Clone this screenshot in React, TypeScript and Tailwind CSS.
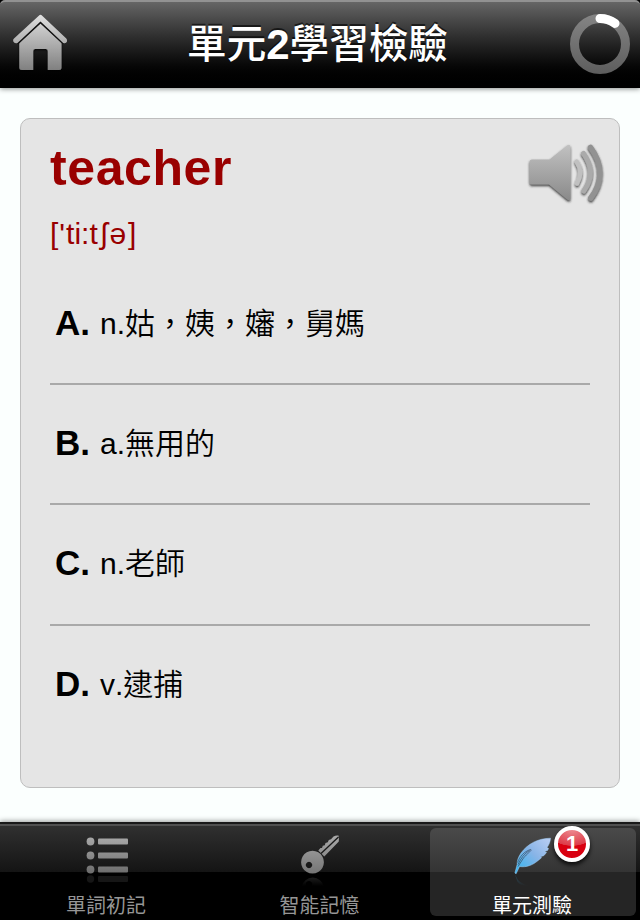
import React from "react";

const choices = [
  { letter: "A", text: "n.姑，姨，嬸，舅媽", row: "h-[120px]" },
  { letter: "B", text: "a.無用的", row: "h-[120px]" },
  { letter: "C", text: "n.老師", row: "h-[121px]" },
  { letter: "D", text: "v.逮捕", row: "h-[120px]" },
];

function HomeIcon() {
  return (
    <svg width="60" height="64" viewBox="10 10 60 64" className="block">
      <defs>
        <linearGradient id="home" x1="0" y1="15" x2="0" y2="70" gradientUnits="userSpaceOnUse">
          <stop offset="0" stopColor="#e0e0e0" />
          <stop offset="1" stopColor="#808080" />
        </linearGradient>
        <filter id="homeShadow" x="-20%" y="-20%" width="140%" height="140%">
          <feDropShadow dx="0" dy="1" stdDeviation="0.8" floodColor="#000" floodOpacity="0.9" />
        </filter>
      </defs>
      <path d="M40.5 22.5 L61.5 43 V67.500 Q61.500 70 59 70 H47.800 V51 Q47.800 49 46 49 H35 Q33.200 49 33.200 51 V70 H22 Q19.300 70 19.300 67.500 V43 Z" fill="url(#home)" filter="url(#homeShadow)" />
      <path d="M17.500 43.500 L40.500 22.300 L63.500 43.500" fill="none" stroke="#111" strokeWidth="2.200" />
      <path d="M38.800 15.700 Q40.500 14 42.200 15.700 L66.300 38.600 Q67.300 39.700 67 41.500 Q66 44 63.200 43 L40.500 21.400 L17.500 43 Q14.500 44 13.300 41.500 Q12.600 39.700 14 38.600 Z" fill="url(#home)" />
    </svg>
  );
}

function ProgressRing() {
  return (
    <svg width="60" height="60" viewBox="0 0 60 60" className="block">
      <defs>
        <linearGradient id="ring" x1="0" y1="0" x2="0" y2="60" gradientUnits="userSpaceOnUse">
          <stop offset="0" stopColor="#858585" />
          <stop offset="1" stopColor="#5d5d5d" />
        </linearGradient>
      </defs>
      <circle cx="30" cy="30" r="25.500" fill="none" stroke="url(#ring)" strokeWidth="9" />
      <path d="M30 4.500 A25.500 25.500 0 0 1 45 9.400" fill="none" stroke="#fff" strokeWidth="9" strokeLinecap="round" />
    </svg>
  );
}

function SpeakerIcon() {
  return (
    <svg width="84" height="68" viewBox="524 140 84 68" className="block">
      <defs>
        <linearGradient id="horn" x1="0" y1="144" x2="0" y2="201" gradientUnits="userSpaceOnUse">
          <stop offset="0" stopColor="#c2c2c2" />
          <stop offset="1" stopColor="#898989" />
        </linearGradient>
        <filter id="hornShadow" x="-20%" y="-20%" width="140%" height="140%">
          <feDropShadow dx="0" dy="1.500" stdDeviation="0.900" floodColor="#222" floodOpacity="0.900" />
        </filter>
      </defs>
      <g filter="url(#hornShadow)">
        <path d="M532 159.500 H549.500 L567 145.500 Q570.500 143.500 570.500 147.500 V198 Q570.500 202 566.500 199 L549 184.500 H532 Q529.500 184.500 529.500 182 V162 Q529.500 159.500 532 159.500Z" fill="url(#horn)" />
        <g fill="none" strokeLinecap="round">
          <path d="M576.500 161.500 C581.500 169 581.500 176 577 183.500" stroke="#c0c0c0" strokeWidth="4.500" />
          <path d="M583.500 153.500 C592.500 166 592.500 179 583.800 191" stroke="#aaaaaa" strokeWidth="5" />
          <path d="M590.500 147.500 C603 164 603 182 590.800 198" stroke="#929292" strokeWidth="5.500" />
        </g>
      </g>
    </svg>
  );
}

function ListIcon() {
  return (
    <svg width="50" height="52" viewBox="82 832 50 52" className="block">
      <defs>
        <linearGradient id="list" x1="0" y1="836" x2="0" y2="874" gradientUnits="userSpaceOnUse">
          <stop offset="0" stopColor="#aaa" />
          <stop offset="1" stopColor="#6c6c6c" />
        </linearGradient>
      </defs>
      <g fill="url(#list)">
        {[841.5, 855.500, 869.5].map((y) => (
          <g key={y}>
            <circle cx="91.500" cy={y} r="3.900" />
            <rect x="99" y={y - 3} width="30" height="6" rx="1" />
          </g>
        ))}
      </g>
      <g fill="#161616">
        <circle cx="91.500" cy="879" r="3.700" />
        <rect x="99" y="876" width="30" height="6" rx="1" />
      </g>
    </svg>
  );
}

function KeyIcon() {
  return (
    <svg width="50" height="60" viewBox="295 830 50 60" className="block">
      <defs>
        <linearGradient id="key" x1="0" y1="835" x2="0" y2="874" gradientUnits="userSpaceOnUse">
          <stop offset="0" stopColor="#aaa" />
          <stop offset="1" stopColor="#747474" />
        </linearGradient>
        <linearGradient id="keyReflection" x1="0" y1="875" x2="0" y2="886" gradientUnits="userSpaceOnUse">
          <stop offset="0" stopColor="#242424" />
          <stop offset="1" stopColor="#000" />
        </linearGradient>
      </defs>
      <path d="M318.300 850.500 L320.500 848 L322 848 L322.800 845.800 L324.800 845.300 L325.500 843 L327.800 842.300 L328.800 840 L331 839.300 L333.500 836.500 Q336 835 338.500 835.500 Q339.300 838 338.800 841.500 L324.300 856.500 Z" fill="url(#key)" />
      <path d="M321 853.500 L338.500 837" stroke="#181818" strokeWidth="1.300" />
      <path fillRule="evenodd" d="M312.500 850.800 A11.400 11.400 0 1 0 312.510 850.800Z M309 861.800 A3.200 3.200 0 1 1 308.990 861.800Z" fill="url(#key)" />
      <path fillRule="evenodd" d="M301.500 887 A11.500 12 0 0 1 324 887Z M309 881 A3.200 3.200 0 1 0 309.010 881Z" fill="url(#keyReflection)" />
    </svg>
  );
}

function FeatherIcon() {
  return (
    <svg width="50" height="58" viewBox="508 832 50 58" className="block">
      <defs>
        <linearGradient id="feather" x1="548" y1="838" x2="518" y2="868" gradientUnits="userSpaceOnUse">
          <stop offset="0" stopColor="#b8cdf3" />
          <stop offset="0.500" stopColor="#88b4e7" />
          <stop offset="1" stopColor="#40b5ef" />
        </linearGradient>
        <linearGradient id="featherReflection" x1="0" y1="875" x2="0" y2="886" gradientUnits="userSpaceOnUse">
          <stop offset="0" stopColor="#2a4655" />
          <stop offset="1" stopColor="#252525" />
        </linearGradient>
      </defs>
      <path d="M550.500 838.200 C538 838.500 528 843.500 521 853 C518 857.500 517 861 517.200 864.500 L514.900 873 L516.100 873.800 L519.500 866.500 C526 867.500 532 865.500 537.500 861 L541.500 857.800 L540.500 856.800 L544 855.500 L546.500 852.500 L544.500 851.500 L547.500 850.500 L548.500 848.500 L547 847.500 C549.200 844.500 550.300 841.500 550.500 838.200Z" fill="url(#feather)" stroke="#a4d3fb" strokeWidth="0.500" />
      <path d="M517.600 862.500 C519.500 857 524 851.500 530.500 849.500 C533 850 527.500 853 523.500 858 L518 866.500 M518 864.500 C521 858 524.500 853.500 529.500 850.500" fill="none" stroke="#35495e" strokeWidth="0.700" />
      <path d="M515 874.500 L518 880 Q522 884 529 886 Q520 886 517.500 882 Z" fill="url(#featherReflection)" />
    </svg>
  );
}

export default function App() {
  return (
    <div className="flex h-[920px] w-[640px] flex-col overflow-hidden bg-[#fbfffe] font-['Liberation_Sans','Noto_Sans_CJK_TC',sans-serif]" lang="zh-TW">
      <header className="z-10 h-[88px] shrink-0 bg-black shadow-[0_1px_5px_rgba(0,0,0,0.45)]">
        <div className="flex h-full items-start justify-between rounded-t-[5px] border-t-2 border-[#929292] bg-linear-to-b from-[#666] to-black pr-[10px] pl-[10px]">
          <div className="w-[60px] pt-[8px]"><HomeIcon /></div>
          <h1 className="mr-[5px] flex h-[86px] items-center text-[39.6px] leading-none font-medium whitespace-nowrap text-white [text-shadow:0_-2px_0_rgba(0,0,0,0.6)]">
            單元<span className="text-[42px] font-bold">2</span>學習檢驗
          </h1>
          <div className="pt-[12px]"><ProgressRing /></div>
        </div>
      </header>

      <main className="flex-1 px-5 pt-[30px]">
        <section className="h-[670px] rounded-[10px] border border-[#bebebe] bg-[#e5e5e5] px-[29px]">
          <div className="flex h-[146px] justify-between">
            <div className="pt-[21px] text-[#990000]">
              <h2 className="text-[50px] leading-[56px] font-bold tracking-[0.6px]">teacher</h2>
              <p className="mt-[20px] text-[30px] leading-[36px]">
                [<span className="mr-[1px] ml-[1px]">&#39;</span>ti:t<span className="mr-[2px] ml-[3px]">ʃ</span>ə<span className="ml-[2px]">]</span>
              </p>
            </div>
            <div className="-mr-[18px] pt-[21px]"><SpeakerIcon /></div>
          </div>
          <ul className="text-black">
            {choices.map((choice, index) => (
              <li key={choice.letter} className={`${choice.row} flex items-start pl-[5px] ${index < 3 ? "border-b-2 border-[#a9a9a9]" : ""}`}>
                <span className="mt-[38px] w-[45px] shrink-0 text-[35px] leading-[40px] font-bold">{choice.letter}.</span>
                <span className="mt-[37px] text-[30px] leading-[44px] font-[350] whitespace-nowrap [font-kerning:none]">{choice.text}</span>
              </li>
            ))}
          </ul>
        </section>
      </main>

      <footer className="z-10 h-[98px] shrink-0 border-t-2 border-[#191919] shadow-[0_-1px_5px_rgba(0,0,0,0.4)]">
        <nav className="flex h-[96px] border-t-2 border-[#505050] bg-[linear-gradient(to_bottom,#303030_0px,#141414_46px,#000_46px,#000_100%)] text-[20px] leading-[28px] text-[#969696]">
          <div className="flex w-[212px] flex-col items-center">
            <div className="mt-[6px] h-[60px]"><ListIcon /></div>
            <span>單詞初記</span>
          </div>
          <div className="flex w-[215px] flex-col items-center">
            <div className="mt-[4px] h-[62px]"><KeyIcon /></div>
            <span>智能記憶</span>
          </div>
          <div className="relative mt-[2px] ml-[3px] flex h-[88px] w-[206px] flex-col items-center rounded-[6px] bg-[linear-gradient(to_bottom,#4a4a4a_0px,#343434_44px,#252525_44px,#252525_100%)] text-white">
            <div className="mt-[4px] h-[60px]"><FeatherIcon /></div>
            <span className="mt-[2px] mr-[2px]">單元測驗</span>
            <span className="absolute -top-[2px] left-[124px] flex h-9 w-9 items-center justify-center rounded-full border-4 border-white bg-[radial-gradient(ellipse_24px_16px_at_50%_0%,#ed898f_0%,#dd3b48_97%,#d90010_100%)] text-[22px] leading-none font-bold shadow-[0_3px_4px_rgba(0,0,0,0.8)]">1</span>
          </div>
        </nav>
      </footer>
    </div>
  );
}
